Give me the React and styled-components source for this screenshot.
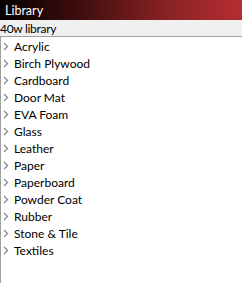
import React from 'react';
import styled, { createGlobalStyle } from 'styled-components';

const GlobalStyle = createGlobalStyle`
    html, body {
        margin: 0;
        padding: 0;
        background: #fff;
    }
    body {
        font-family: Lato, "Open Sans", sans-serif;
    }
`

const items = [
    'Acrylic',
    'Birch Plywood',
    'Cardboard',
    'Door Mat',
    'EVA Foam',
    'Glass',
    'Leather',
    'Paper',
    'Paperboard',
    'Powder Coat',
    'Rubber',
    'Stone & Tile',
    'Textiles',
];

const Chevron = () => (
    <svg width="6" height="9" viewBox="0 0 6 9">
        <path d="M1 1 L4.5 4.5 L1 8" fill="none" stroke="#8a8a8a" strokeWidth="1.3" />
    </svg>
)

const App = () => {
    return (
        <Panel>
            <GlobalStyle />
            <TitleBar>Library</TitleBar>
            <SubBar>40w library</SubBar>
            <Tree>
                {items.map((name) => (
                    <Row key={name}>
                        <Toggle><Chevron /></Toggle>
                        <Label>{name}</Label>
                    </Row>
                ))}
            </Tree>
        </Panel>
    )
}

export default App

const Panel = styled.div`
    width: 242px;
    height: 283px;
    display: flex;
    flex-direction: column;
    overflow: hidden;
`

const TitleBar = styled.div`
    height: 20px;
    flex: none;
    display: flex;
    align-items: center;
    padding-left: 5px;
    background: linear-gradient(to right, #050000 0%, #3a0c0c 30%, #8a2224 70%, #b52d31 100%);
    color: #fff;
    font-size: 12.5px;
`

const SubBar = styled.div`
    height: 16px;
    flex: none;
    display: flex;
    align-items: center;
    background: #f0f0f0;
    color: #000;
    font-size: 12px;
    letter-spacing: -0.3px;
    border-bottom: 1px solid #a0a0a0;
`

const Tree = styled.div`
    flex: 1;
    background: #fff;
    border-left: 1px solid #a0a0a0;
    padding-top: 1px;
    display: flex;
    flex-direction: column;
`

const Row = styled.div`
    height: 17px;
    display: flex;
    align-items: center;
`

const Toggle = styled.span`
    width: 13px;
    display: flex;
    align-items: center;
    padding-left: 2px;
    box-sizing: border-box;
`

const Label = styled.span`
    font-size: 12px;
    color: #000;
`
